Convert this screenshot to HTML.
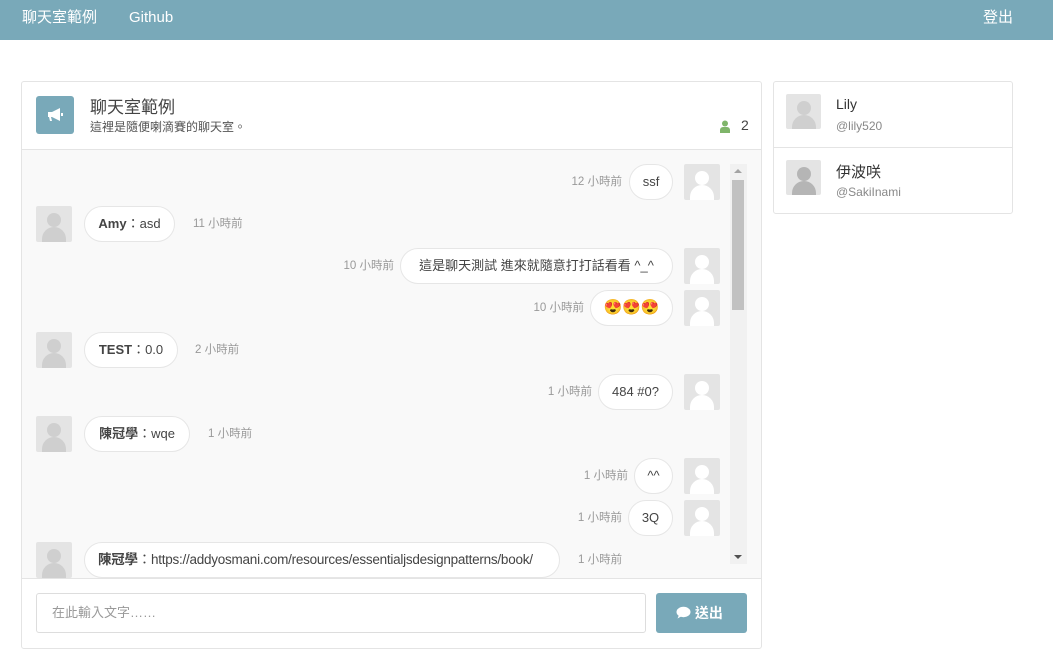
<!DOCTYPE html>
<html><head><meta charset="utf-8"><style>
*{box-sizing:border-box;margin:0;padding:0}
body{width:1053px;height:665px;background:#fff;font-family:"Liberation Sans","Noto Sans CJK TC",sans-serif;position:relative;overflow:hidden;color:#333}
.nav{position:absolute;left:0;top:0;width:1053px;height:40px;background:#79a9b9;color:#fff;font-size:15px}
.nav span{position:absolute;top:9px;line-height:17px}
.panel{position:absolute;left:21px;top:81px;width:741px;height:568px;border:1px solid #e4e4e4;border-radius:3px;background:#fff;overflow:hidden}
.head{position:absolute;left:0;top:0;width:739px;height:68px;border-bottom:1px solid #e4e4e4}
.msgs{position:absolute;left:0;top:68px;width:739px;height:429px;background:#f9f9f9;border-bottom:1px solid #e4e4e4;overflow:hidden}
.a{position:absolute;width:36px;height:36px;background:#e4e4e4;border-radius:2px;overflow:hidden}
.a i{position:absolute;left:11px;top:7px;width:14px;height:14px;border-radius:50%}
.a b{position:absolute;left:6px;top:21px;width:24px;height:22px;border-radius:12px 12px 0 0}
.l i,.l b{background:#cfcfcf}
.r i,.r b{background:#fff}
.bub{position:absolute;height:36px;border:1px solid #e6e6e6;border-radius:18px;background:#fff;font-size:13px;line-height:34px;text-align:center;white-space:nowrap;color:#444;overflow:hidden}
.t{position:absolute;font-size:11.5px;color:#999;line-height:36px;white-space:nowrap}
.tr{text-align:right}
</style></head><body>
<div class="nav"><span style="left:22px">聊天室範例</span><span style="left:129px">Github</span><span style="left:983px">登出</span></div>
<div class="panel">
 <div class="head">
  <div style="position:absolute;left:14px;top:14px;width:38px;height:38px;background:#79a9b9;border-radius:3px">
   <svg width="38" height="38" viewBox="0 0 38 38"><path d="M12 16h4l8-4v13l-8-4h-1l1 4h-2l-1-4h-1z" fill="#fff"/><rect x="25" y="17" width="2" height="3" fill="#fff"/></svg>
  </div>
  <div style="position:absolute;left:68px;top:11px;font-size:17px;color:#444">聊天室範例</div>
  <div style="position:absolute;left:68px;top:36px;font-size:12px;color:#555">這裡是隨便喇滴賽的聊天室。</div>
  <svg style="position:absolute;left:697px;top:38px" width="12" height="13" viewBox="0 0 12 13"><circle cx="6" cy="3.5" r="3" fill="#7fb56a"/><path d="M1 13v-3a3 3 0 0 1 3-3h4a3 3 0 0 1 3 3v3z" fill="#7fb56a"/></svg>
  <div style="position:absolute;left:719px;top:35px;font-size:14px;color:#444">2</div>
 </div>
 <div class="msgs">
  <div class="t tr" style="right:139px;top:14px">12 小時前</div><div class="bub" style="left:607px;width:44px;top:14px">ssf</div><div class="a r" style="left:662px;top:14px"><i></i><b></b></div>
  <div class="a l" style="left:14px;top:56px"><i></i><b></b></div><div class="bub" style="left:62px;width:91px;top:56px"><b>Amy</b>：asd</div><div class="t" style="left:171px;top:56px">11 小時前</div>
  <div class="t tr" style="right:367px;top:98px">10 小時前</div><div class="bub" style="left:378px;width:273px;top:98px">這是聊天測試 進來就隨意打打話看看 ^_^</div><div class="a r" style="left:662px;top:98px"><i></i><b></b></div>
  <div class="t tr" style="right:177px;top:140px">10 小時前</div><div class="bub" style="left:568px;width:83px;top:140px;font-size:15px">😍😍😍</div><div class="a r" style="left:662px;top:140px"><i></i><b></b></div>
  <div class="a l" style="left:14px;top:182px"><i></i><b></b></div><div class="bub" style="left:62px;width:94px;top:182px"><b>TEST</b>：0.0</div><div class="t" style="left:173px;top:182px">2 小時前</div>
  <div class="t tr" style="right:169px;top:224px">1 小時前</div><div class="bub" style="left:576px;width:75px;top:224px">484 #0?</div><div class="a r" style="left:662px;top:224px"><i></i><b></b></div>
  <div class="a l" style="left:14px;top:266px"><i></i><b></b></div><div class="bub" style="left:62px;width:106px;top:266px"><b>陳冠學</b>：wqe</div><div class="t" style="left:186px;top:266px">1 小時前</div>
  <div class="t tr" style="right:133px;top:308px">1 小時前</div><div class="bub" style="left:612px;width:39px;top:308px">^^</div><div class="a r" style="left:662px;top:308px"><i></i><b></b></div>
  <div class="t tr" style="right:139px;top:350px">1 小時前</div><div class="bub" style="left:606px;width:45px;top:350px">3Q</div><div class="a r" style="left:662px;top:350px"><i></i><b></b></div>
  <div class="a l" style="left:14px;top:392px"><i></i><b></b></div><div class="bub" style="left:62px;width:476px;top:392px;font-size:13.5px;letter-spacing:-0.25px;text-align:left;padding-left:13px"><b>陳冠學</b>：https://addyosmani.com/resources/essentialjsdesignpatterns/book/</div><div class="t" style="left:556px;top:392px">1 小時前</div>
  <div style="position:absolute;left:708px;top:14px;width:17px;height:400px;background:#f1f1f1">
   <div style="position:absolute;left:4px;top:5px;border:4px solid transparent;border-bottom:4px solid #a3a3a3;border-top:0"></div>
   <div style="position:absolute;left:2px;top:16px;width:12px;height:130px;background:#c1c1c1"></div>
   <div style="position:absolute;left:4px;bottom:5px;border:4px solid transparent;border-top:4px solid #505050;border-bottom:0"></div>
  </div>
 </div>
 <div style="position:absolute;left:14px;top:511px;width:610px;height:40px;border:1px solid #ddd;border-radius:3px;font-size:13px;color:#999;line-height:38px;padding-left:15px">在此輸入文字……</div>
 <div style="position:absolute;left:634px;top:511px;width:91px;height:40px;background:#79a9b9;border-radius:3px;color:#fff;font-size:14px;font-weight:bold;line-height:40px;padding-left:20px">
  <svg width="15" height="13" viewBox="0 0 15 13" style="vertical-align:-1px"><ellipse cx="7.5" cy="6" rx="7" ry="5.2" fill="#fff"/><path d="M3 9l-1.5 3.5L6 10z" fill="#fff"/></svg> 送出</div>
</div>
<div style="position:absolute;left:773px;top:81px;width:240px;height:133px;border:1px solid #e4e4e4;border-radius:3px">
 <div class="a l" style="left:12px;top:12px;width:35px;height:35px"><i></i><b></b></div>
 <div style="position:absolute;left:62px;top:14px;font-size:14px;color:#333">Lily</div>
 <div style="position:absolute;left:62px;top:37px;font-size:12px;color:#888">@lily520</div>
 <div style="position:absolute;left:0;top:65px;width:238px;border-top:1px solid #e4e4e4"></div>
 <div class="a" style="left:12px;top:78px;width:35px;height:35px"><i style="background:#b5b5b5"></i><b style="background:#b5b5b5"></b></div>
 <div style="position:absolute;left:62px;top:79px;font-size:15px;color:#333">伊波咲</div>
 <div style="position:absolute;left:62px;top:103px;font-size:12px;color:#888">@SakiInami</div>
</div>
</body></html>
